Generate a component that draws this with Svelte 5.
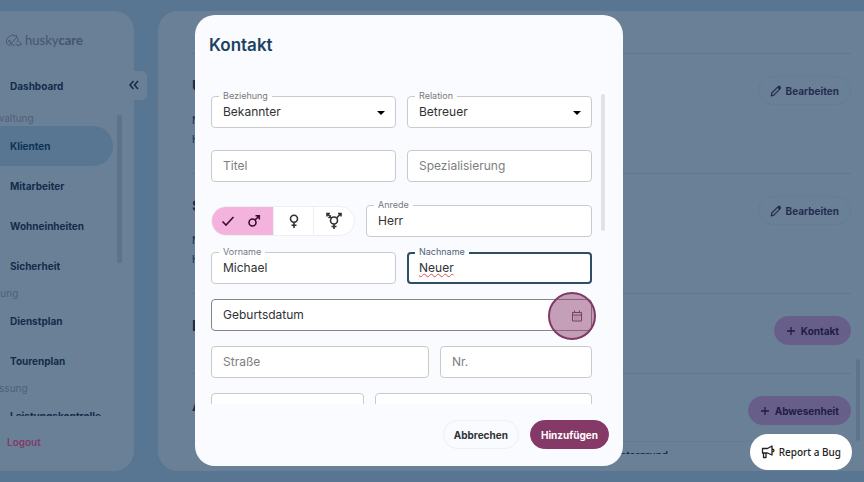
<script>
  const navGroups = [
    { title: 'Verwaltung', items: ['Klienten', 'Mitarbeiter', 'Wohneinheiten', 'Sicherheit'] },
    { title: 'Planung', items: ['Dienstplan', 'Tourenplan'] },
    { title: 'Erfassung', items: ['Leistungskontrolle'] }
  ];

  const sections = [
    { title: 'Unterkunft', action: 'Bearbeiten', rows: ['Name', 'Haus'] },
    { title: 'Sozialdaten', action: 'Bearbeiten', rows: ['Name', 'Haus'] },
    { title: 'Kontakte', action: 'Kontakt', rows: [] },
    { title: 'Abwesenheiten', action: 'Abwesenheit', rows: [] }
  ];

  let activeItem = $state('Klienten');
  let gender = $state('m');
  let contact = $state({
    relationship: 'Bekannter',
    relation: 'Betreuer',
    title: '',
    specialisation: '',
    salutation: 'Herr',
    firstName: 'Michael',
    lastName: 'Neuer',
    birthday: '',
    street: '',
    number: ''
  });
</script>

<div class="app">
  <aside class="sidebar">
    <div class="logo">
      <svg viewBox="0 0 18 14" width="18" height="14" fill="none" stroke="currentColor" stroke-linecap="round" stroke-linejoin="round">
        <path d="M5 12.500C2.500 12 1 10 1.500 7.500 2 5 4 3 6.500 2.500L8 1.500 9 3 11.500 2.500 12 5C13.500 6 13.500 8 12 9" />
        <path d="M3.500 8.500 4.500 7 6 11 10.500 5.500M6 11 9 12.500M14.500 9 16.500 11.500 14 12.500 11 11.500" />
      </svg>
      <span>husky<b>care</b></span>
    </div>
    <a class="nav-item" href="#dashboard">Dashboard</a>
    <button class="collapse" aria-label="Menü einklappen">
      <svg viewBox="0 0 10 10" width="10" height="10" fill="none" stroke="currentColor" stroke-width="1.500">
        <path d="M4.500 1 1 5l3.500 4M9 1 5.500 5 9 9" />
      </svg>
    </button>
    <div class="nav-scroll">
      <nav>
        {#each navGroups as group}
          <h2>{group.title}</h2>
          {#each group.items as item}
            <a
              class="nav-item"
              class:active={activeItem === item}
              href="#{item.toLowerCase()}"
              onclick={() => (activeItem = item)}>{item}</a>
          {/each}
        {/each}
      </nav>
      <div class="thumb"></div>
    </div>
    <button class="logout">Logout</button>
  </aside>

  <main>
    <div class="content">
      {#each sections as section}
        <section class:tall={section.rows.length > 0}>
          <div class="section-head">
            <h2>{section.title}</h2>
            <button class="pill" class:tinted={section.action !== 'Bearbeiten'}>
              {#if section.action === 'Bearbeiten'}
                <svg viewBox="0 0 12 12" width="12" height="12" fill="none" stroke="currentColor" stroke-width="1.200" stroke-linejoin="round">
                  <path d="M1.200 10.800 1.800 8 8.200 1.600q.9-.8 1.800 0t0 2.200L3.800 10.200Z" />
                  <path d="M8 2l2 2" stroke-width="2" />
                </svg>
              {:else}
                <svg viewBox="0 0 10 10" width="10" height="10" fill="none" stroke="currentColor" stroke-width="1.300">
                  <path d="M5 1v8M1 5h8" />
                </svg>
              {/if}
              {section.action}
            </button>
          </div>
          {#each section.rows as row}
            <p>{row}</p>
          {/each}
        </section>
      {/each}
      <div class="table-head"><span>Hintergrund</span></div>
    </div>
    <div class="thumb"></div>
  </main>
</div>

<div class="overlay">
  <div class="dialog" role="dialog" aria-modal="true" aria-labelledby="dialog-title">
    <h1 id="dialog-title">Kontakt</h1>

    <div class="form-scroll">
      <form>
        <div class="row halves spaced">
          <div class="field">
            <label for="relationship">Beziehung</label>
            <select id="relationship" bind:value={contact.relationship}>
              <option>Bekannter</option>
              <option>Verwandter</option>
            </select>
            <svg class="caret" viewBox="0 0 8 4" width="8" height="4"><path d="M0 0h8L4 4z" /></svg>
          </div>
          <div class="field">
            <label for="relation">Relation</label>
            <select id="relation" bind:value={contact.relation}>
              <option>Betreuer</option>
              <option>Arzt</option>
            </select>
            <svg class="caret" viewBox="0 0 8 4" width="8" height="4"><path d="M0 0h8L4 4z" /></svg>
          </div>
        </div>

        <div class="row halves spaced">
          <div class="field">
            <input aria-label="Titel" placeholder="Titel" bind:value={contact.title} />
          </div>
          <div class="field">
            <input aria-label="Spezialisierung" placeholder="Spezialisierung" bind:value={contact.specialisation} />
          </div>
        </div>

        <div class="row person">
          <div class="genders" role="group" aria-label="Geschlecht">
            <button type="button" class:selected={gender === 'm'} aria-label="Männlich" onclick={() => (gender = 'm')}>
              {#if gender === 'm'}
                <svg viewBox="0 0 14 12" width="14" height="12"><path d="M1.500 6.500 5 10l7.500-8" /></svg>
              {/if}
              <svg viewBox="0 0 14 14" width="14" height="14">
                <circle cx="5.500" cy="8.500" r="3.500" />
                <path d="M8 6l4.300-4.300M8.500 1.700h3.800v3.800" />
              </svg>
            </button>
            <button type="button" class:selected={gender === 'f'} aria-label="Weiblich" onclick={() => (gender = 'f')}>
              <svg viewBox="0 0 14 14" width="14" height="14">
                <circle cx="7" cy="4.800" r="3.500" />
                <path d="M7 8.300V14M4.500 11.300h5" />
              </svg>
            </button>
            <button type="button" class:selected={gender === 'd'} aria-label="Divers" onclick={() => (gender = 'd')}>
              <svg viewBox="0 0 18 18" width="18" height="18">
                <circle cx="9" cy="8.500" r="3.500" />
                <path d="M9 12v5M6.500 14.500h5M6.500 6 2 1.500M2 4.500v-3h3M3.500 6 6 3.500M11.500 6 16 1.500M16 4.500v-3h-3" />
              </svg>
            </button>
          </div>
          <div class="field">
            <label for="salutation">Anrede</label>
            <input id="salutation" bind:value={contact.salutation} />
          </div>
        </div>

        <div class="row halves">
          <div class="field">
            <label for="first-name">Vorname</label>
            <input id="first-name" bind:value={contact.firstName} />
          </div>
          <div class="field focused">
            <label for="last-name">Nachname</label>
            <input id="last-name" bind:value={contact.lastName} />
            <span class="misspelled" aria-hidden="true">{contact.lastName}</span>
          </div>
        </div>

        <div class="row">
          <div class="field hovered">
            <input aria-label="Geburtsdatum" placeholder="Geburtsdatum" bind:value={contact.birthday} />
            <button type="button" class="date-picker" aria-label="Datum wählen">
              <svg viewBox="0 0 12 12" width="12" height="12" fill="none" stroke="currentColor">
                <path d="M1.500 2.500h9v8.500h-9zM1.500 5h9M3.500 .5v2M8.500 .5v2" />
                <path d="M3.500 7h1M5.500 7h1M7.500 7h1M3.500 9h1M5.500 9h1M7.500 9h1" stroke-opacity=".6" />
              </svg>
            </button>
          </div>
        </div>

        <div class="row street">
          <div class="field">
            <input aria-label="Straße" placeholder="Straße" bind:value={contact.street} />
          </div>
          <div class="field">
            <input aria-label="Nr." placeholder="Nr." bind:value={contact.number} />
          </div>
        </div>

        <div class="row city">
          <div class="field"><input aria-label="PLZ" /></div>
          <div class="field"><input aria-label="Ort" /></div>
        </div>
      </form>
      <div class="thumb"></div>
    </div>

    <footer>
      <button class="cancel">Abbrechen</button>
      <button class="submit">Hinzufügen</button>
    </footer>
  </div>
</div>

<button class="report">
  <svg viewBox="0 0 14 14" width="14" height="14" fill="none" stroke="currentColor" stroke-width="1.300" stroke-linejoin="round" stroke-linecap="round">
    <path d="M1.500 3.500h5L11 1v9L6.500 8h-5zM2.500 8v4.500H5V8M11 4q2 .2 2 1.600T11 7.200" />
  </svg>
  Report a Bug
</button>

<style>
  :global(body) {
    margin: 0;
    background: #587692;
    font-family: Inter, 'Liberation Sans', sans-serif;
    font-size: 10px;
    color: #122c4c;
  }

  button,
  input,
  select {
    font: inherit;
    color: inherit;
  }

  button {
    margin: 0;
    padding: 0;
    border: 0;
    background: none;
    cursor: pointer;
  }

  h1,
  h2,
  p {
    margin: 0;
  }

  .app {
    display: flex;
    gap: 24px;
    box-sizing: border-box;
    height: 100vh;
    padding: 11px 0;
    overflow: hidden;
  }

  .sidebar {
    position: relative;
    display: flex;
    flex: none;
    flex-direction: column;
    box-sizing: border-box;
    width: 154px;
    margin-left: -20px;
    padding-top: 19px;
    border-radius: 20px;
    background: #6a8096;
  }

  .logo {
    display: flex;
    align-items: center;
    gap: 2px;
    height: 20px;
    margin-bottom: 16px;
    padding-left: 25px;
    font-family: Lato, sans-serif;
    font-size: 13px;
    color: #46546f;
  }

  .nav-item {
    display: block;
    flex: none;
    padding-left: 30px;
    border-radius: 20px;
    line-height: 40px;
    font-weight: 700;
    color: #122c4c;
    text-decoration: none;
  }

  .nav-item.active {
    background: #587692;
    color: #0d3454;
  }

  .collapse {
    position: absolute;
    top: 60px;
    right: -13px;
    width: 26px;
    height: 29px;
    border-radius: 6px;
    background: #6a8096;
  }

  .nav-scroll {
    display: flex;
    flex: 1;
    gap: 4px;
    min-height: 0;
    margin: 5px 12px 0 0;
    overflow: hidden;
  }

  nav {
    flex: 1;
  }

  nav h2 {
    font-size: 10px;
    line-height: 15px;
    font-weight: 400;
    color: #4c6079;
  }

  .thumb {
    flex: none;
    width: 4px;
    border-radius: 2px;
  }

  .nav-scroll .thumb {
    width: 5px;
    height: 148px;
    margin-top: 4px;
    background: #5e728a;
  }

  .logout {
    height: 55px;
    padding: 0 0 4px 27px;
    text-align: left;
    font-weight: 600;
    color: #803a66;
  }

  main {
    display: flex;
    flex: 1;
    gap: 5px;
    min-width: 0;
    margin-right: -20px;
    padding: 42px 24px 17px 34px;
    border-radius: 20px;
    background: #6a8096;
  }

  .content {
    flex: 1;
    overflow: hidden;
  }

  section {
    box-sizing: border-box;
    height: 80px;
    padding-top: 22px;
    border-top: 1px solid #5f7890;
  }

  section.tall {
    height: 120px;
  }

  section:nth-of-type(4) {
    height: 68px;
  }

  .section-head {
    display: flex;
    align-items: flex-start;
    justify-content: space-between;
    margin-bottom: 6px;
  }

  .section-head h2 {
    font-size: 15px;
    line-height: 20px;
  }

  section p {
    line-height: 19px;
  }

  .pill {
    display: flex;
    align-items: center;
    gap: 4px;
    height: 29px;
    padding: 0 11px;
    border: 1px solid #647d94;
    border-radius: 15px;
    font-weight: 700;
    color: #262c50;
  }

  .pill.tinted {
    gap: 5px;
    border-color: #675f8a;
    background: #675f8a;
    color: #1f1c48;
  }

  .table-head {
    padding: 5px 0 0 418px;
    border-top: 1px solid #647b92;
    line-height: 16px;
    font-weight: 600;
  }

  main .thumb {
    align-self: flex-end;
    height: 82px;
    margin-bottom: 13px;
    background: #5e748c;
  }

  .overlay {
    position: fixed;
    inset: 0;
    display: flex;
    justify-content: center;
    padding: 15px 46px 16px 0;
  }

  .dialog {
    display: flex;
    flex-direction: column;
    box-sizing: border-box;
    width: 428px;
    padding: 18px 14px 17px;
    border-radius: 20px;
    background: #fafbff;
    color: #303133;
  }

  h1 {
    font-size: 17px;
    line-height: 24px;
    font-weight: 600;
    color: #1d4261;
  }

  .form-scroll {
    display: flex;
    flex: 1;
    gap: 9px;
    min-height: 0;
    margin: 29px 4px 16px 2px;
    overflow: hidden;
  }

  form {
    flex: 1;
    padding-top: 10px;
  }

  .form-scroll .thumb {
    height: 137px;
    margin-top: 8px;
    background: #e1e2e5;
  }

  .row {
    display: grid;
    gap: 11px;
    margin-bottom: 15px;
  }

  .spaced {
    margin-bottom: 22px;
  }

  .spaced + .spaced {
    margin-bottom: 23px;
  }

  .halves {
    grid-template-columns: 1fr 1fr;
  }

  .person {
    grid-template-columns: auto 1fr;
    align-items: center;
  }

  .street {
    grid-template-columns: 218fr 152fr;
  }

  .city {
    grid-template-columns: 153fr 217fr;
  }

  .field {
    position: relative;
    display: flex;
    box-sizing: border-box;
    min-width: 0;
    height: 32px;
    border: 1px solid #c9cacb;
    border-radius: 4px;
    background: #fff;
  }

  .field.hovered {
    border-color: #858688;
  }

  .field.focused {
    border: 2px solid #2f4d66;
  }

  .field label {
    position: absolute;
    top: -7px;
    left: 7px;
    padding: 0 4px;
    background: linear-gradient(#fafbff 50%, #fff 50%);
    font-size: 9px;
    line-height: 12px;
    color: #77797d;
  }

  .focused label {
    top: -8px;
    left: 6px;
    color: #4d6478;
  }

  input,
  select {
    flex: 1;
    box-sizing: border-box;
    width: 100%;
    min-width: 0;
    padding: 0 11px 1px;
    border: 0;
    outline: 0;
    appearance: none;
    background: none;
    font-size: 12px;
  }

  input::placeholder {
    color: #7d7e80;
    opacity: 1;
  }

  .focused input {
    padding: 0 10px 1px;
  }

  .hovered input::placeholder {
    color: #303133;
  }

  .caret {
    position: absolute;
    top: 14px;
    right: 10px;
    pointer-events: none;
  }

  .misspelled {
    position: absolute;
    top: 6px;
    left: 10px;
    font-size: 12px;
    line-height: 16px;
    color: transparent;
    text-decoration: underline wavy #d9534f 1px;
    pointer-events: none;
  }

  .date-picker {
    position: absolute;
    top: -8px;
    right: -5px;
    box-sizing: border-box;
    width: 48px;
    height: 48px;
    padding: 0 0 0 9px;
    border: 2px solid #803a63;
    border-radius: 50%;
    background: rgba(140, 63, 111, 0.5);
    color: #743f61;
  }

  .date-picker svg {
    display: block;
    margin: auto;
  }

  .genders {
    display: flex;
    box-sizing: border-box;
    height: 30px;
    border: 1px solid #eeeff2;
    border-radius: 15px;
    background: #fff;
    overflow: hidden;
  }

  .genders button {
    display: flex;
    align-items: center;
    justify-content: center;
    gap: 12px;
    width: 40px;
    border-right: 1px solid #eeeff2;
  }

  .genders button:last-child {
    border-right: 0;
  }

  .genders .selected {
    width: 62px;
    padding-right: 4px;
    background: #f4b3dc;
    color: #3b0d2d;
  }

  .genders svg {
    fill: none;
    stroke: currentColor;
    stroke-width: 1.6;
  }

  footer {
    display: flex;
    justify-content: flex-end;
    gap: 11px;
  }

  footer button {
    height: 29px;
    padding: 0 10px;
    border: 1px solid #eeeff3;
    border-radius: 15px;
    font-weight: 700;
  }

  .submit {
    border-color: #853966;
    background: #853966;
    color: #fff;
  }

  .report {
    position: fixed;
    right: 12px;
    bottom: 12px;
    display: flex;
    align-items: center;
    gap: 4px;
    height: 36px;
    padding: 0 11px;
    border-radius: 18px;
    background: #fff;
    font-family: 'Noto Sans', sans-serif;
    font-weight: 500;
    color: #222;
  }
</style>
